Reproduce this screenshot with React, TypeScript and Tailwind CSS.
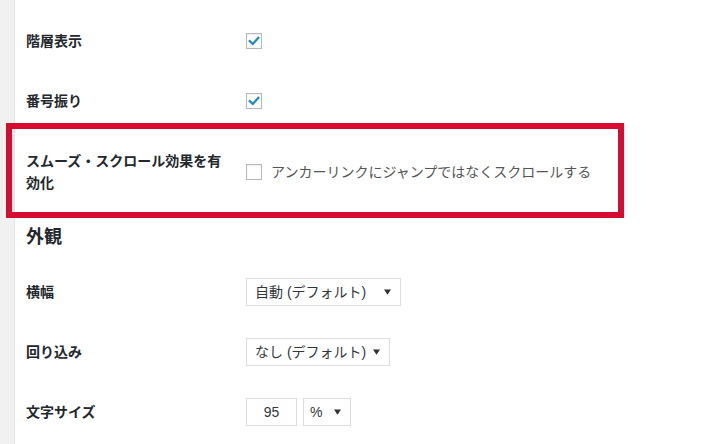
const font = { fontFamily: '"Liberation Sans", "Noto Sans CJK JP", sans-serif' };

function CheckBox({ checked }: { checked?: boolean }) {
  return (
    <span className="relative flex h-4 w-4 shrink-0 items-center justify-center border border-[#b4b9be] bg-white shadow-[inset_0_1px_2px_rgba(0,0,0,0.07)]">
      {checked && (
        <svg viewBox="0 0 16 16" className="h-[14px] w-[14px]">
          <path d="M3.2 8.2 L6.6 11.4 L12.9 4.4" fill="none" stroke="#1e8cbe" strokeWidth="2.6" strokeLinecap="square" />
        </svg>
      )}
    </span>
  );
}

function Arrow() {
  return (
    <svg viewBox="0 0 8 6" className="h-[6px] w-[7px] shrink-0">
      <path d="M0 0 H8 L4 6 Z" fill="#333" />
    </svg>
  );
}

function Row({ label, children }: { label: React.ReactNode; children: React.ReactNode }) {
  return (
    <div className="flex items-center">
      <div className="w-[220px] shrink-0 py-[19px] pr-5 text-[14px] font-bold leading-[22px] text-[#23282d]">{label}</div>
      <div className="flex items-center">{children}</div>
    </div>
  );
}

export default function App() {
  return (
    <div className="relative flex h-[444px] w-[708px] overflow-hidden bg-white" style={font}>
      <div className="w-[15px] shrink-0 border-r border-[#e3e3e3] bg-[#f1f1f1]" />
      <div className="flex-1 pl-[11px] pt-[11px]">
        <Row label="階層表示">
          <CheckBox checked />
        </Row>
        <Row label="番号振り">
          <CheckBox checked />
        </Row>
        <Row label="スムーズ・スクロール効果を有効化">
          <CheckBox />
          <span className="ml-[9px] text-[14px] text-[#555]">アンカーリンクにジャンプではなくスクロールする</span>
        </Row>

        <h2 className="mb-[13px] mt-3 text-[18px] font-bold leading-[24px] text-[#23282d]">外観</h2>

        <Row label="横幅">
          <div className="flex h-[28px] w-[155px] items-center justify-between border border-[#ddd] bg-white pl-[8px] pr-[9px] text-[14px] text-[#32373c]">
            <span>自動 (デフォルト)</span>
            <Arrow />
          </div>
        </Row>
        <Row label="回り込み">
          <div className="flex h-[28px] items-center gap-[7px] border border-[#ddd] bg-white pl-[8px] pr-[9px] text-[14px] text-[#32373c]">
            <span>なし (デフォルト)</span>
            <Arrow />
          </div>
        </Row>
        <Row label="文字サイズ">
          <div className="flex h-[28px] w-[51px] items-center justify-center border border-[#ddd] bg-white text-[14px] text-[#32373c]">95</div>
          <div className="ml-[6px] flex h-[28px] w-[48px] items-center justify-between border border-[#ddd] bg-white pl-[6px] pr-[9px] text-[14px] text-[#32373c]">
            <span>%</span>
            <Arrow />
          </div>
        </Row>
      </div>

      {/* annotation highlight */}
      <div className="absolute left-[6px] top-[123px] h-[95px] w-[618px] border-[6px] border-[#d80b30]" />
    </div>
  );
}
